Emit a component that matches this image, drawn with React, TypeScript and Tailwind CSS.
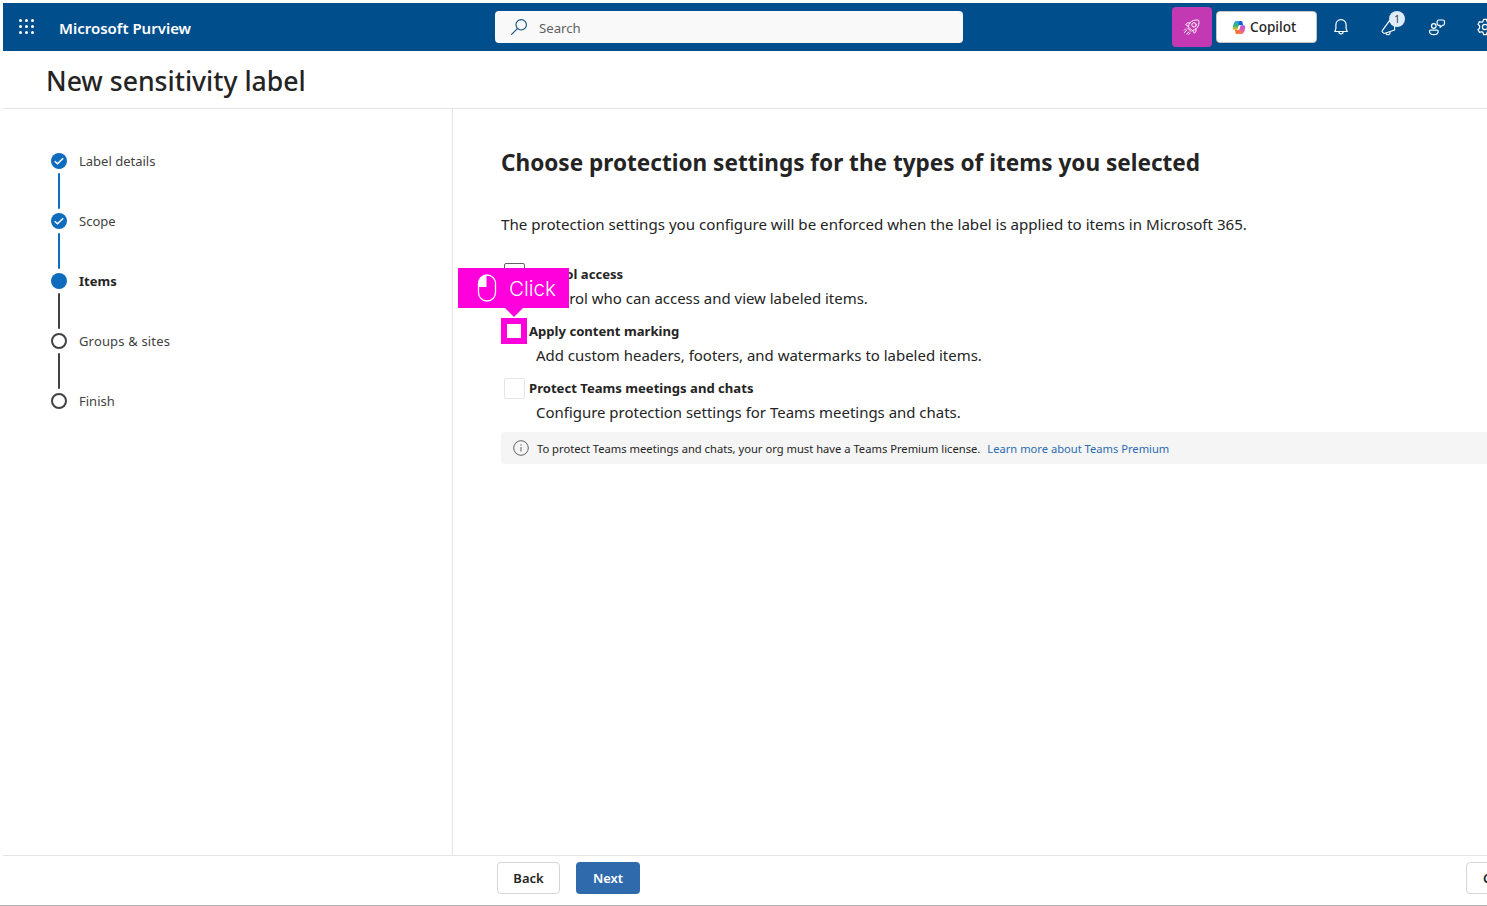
import React from "react";

type StepState = "done" | "current" | "todo";

const steps: { label: string; state: StepState }[] = [
  { label: "Label details", state: "done" },
  { label: "Scope", state: "done" },
  { label: "Items", state: "current" },
  { label: "Groups & sites", state: "todo" },
  { label: "Finish", state: "todo" },
];

function Waffle() {
  const p = [1.5, 7.5, 13.5];
  return (
    <svg className="size-4" viewBox="0 0 16 16" fill="#fff">
      {p.map((y) => p.map((x) => <circle key={`${x}-${y}`} cx={x} cy={y} r="1.5" />))}
    </svg>
  );
}

function SearchIcon() {
  return (
    <svg className="size-4" viewBox="0 0 16 16" fill="none" stroke="#0f4c81" strokeWidth="1.1" strokeLinecap="round">
      <circle cx="10.2" cy="5.8" r="5.2" />
      <path d="M6.4 9.6 0.6 15.4" />
    </svg>
  );
}

function Rocket() {
  return (
    <svg className="size-5" viewBox="0 0 20 20" fill="none" stroke="#fff" strokeWidth="1" strokeLinecap="round" strokeLinejoin="round">
      <path d="M6.400 9.400c.4-2.800 2.300-5 5-5.900 1.900-.6 3.800-.6 5.200-.2.500 1.500.5 3.400-.2 5.200-1 2.600-3.100 4.500-5.900 5z" />
      <circle cx="12" cy="7.900" r="2.200" />
      <path d="M8 5.900c-1.700-.4-3.200.1-4.400 1.600l2.800 1.900M13.900 11.900c.5 1.700 0 3.200-1.500 4.400l-1.900-2.800" />
      <path d="M5.500 10.900 9 14.400M4.900 13l-2.500 2.500M6.900 14.900l-2.300 2.300M3.700 11.800l-1.300 1.300M8.100 16.100l-1.300 1.300" />
    </svg>
  );
}

function CopilotLogo() {
  return (
    <svg className="h-[13px] w-[14px]" viewBox="0 0 24 22">
      <defs>
        <linearGradient id="cpA" x1="0.3" y1="0" x2="0.3" y2="1">
          <stop offset="0" stopColor="#2aa7e8" />
          <stop offset="0.5" stopColor="#35b07c" />
          <stop offset="1" stopColor="#efc31c" />
        </linearGradient>
        <linearGradient id="cpB" x1="0.8" y1="0" x2="0.2" y2="1">
          <stop offset="0" stopColor="#a95af0" />
          <stop offset="0.5" stopColor="#f0569a" />
          <stop offset="1" stopColor="#f79b3c" />
        </linearGradient>
      </defs>
      <path fill="url(#cpA)" d="M15.500 0H7.500C5 0 3.600 2.500 2.600 5.500 1.500 9 0 15 3.800 15h3.900c1 0 1.900-.7 2.200-1.700l2-6.800C12.200 4.500 12.900 3 14 3h4.500C17.600 1 17 0 15.500 0z" />
      <path fill="#1a5fd8" d="M15.500 0c1.500 0 2 1.200 2.500 2.800L19.300 7H14.500c-1.500 0-2.200.6-2.700 2L11 2.500C12 1 13 0 15.500 0z" />
      <path fill="url(#cpB)" d="M8.500 22h8c2.500 0 3.900-2.500 4.900-5.500C22.500 13 24 7 20.200 7h-3.900c-1 0-1.900.7-2.200 1.700l-2 6.800C11.800 17.500 11.100 19 10 19H5.500c.9 2 1.500 3 3 3z" />
      <path fill="#f5733e" d="M8.500 22c-1.500 0-2-1.200-2.500-2.800L4.700 15H9.500c1.500 0 2.200-.6 2.700-2l.8 6.500C12 21 11 22 8.500 22z" />
      <path fill="#fff" d="M12.300 7h2.400l-2.900 8H9.300z" />
    </svg>
  );
}

function Bell() {
  return (
    <svg className="size-5" viewBox="0 0 20 20" fill="none" stroke="#fff" strokeWidth="1.200" strokeLinejoin="round">
      <path d="M10 2.600c-3 0-5.100 2.300-5.100 5.200v3.800L3.800 14.500h12.400l-1.100-2.900V7.800c0-2.900-2.100-5.200-5.100-5.200z" />
      <path d="M7.900 14.700a2.100 2.100 0 0 0 4.200 0" />
    </svg>
  );
}

function Megaphone() {
  return (
    <svg className="size-5" viewBox="0 0 20 20" fill="none" stroke="#fff" strokeWidth="1.200" strokeLinejoin="round">
      <path d="M10.500 3.600 3.500 13.300c-.6.900-.4 1.800.4 2.300l.6.400c.5.300 1 .3 1.500.2L15.600 13V8.500z" />
      <path d="M7 16.200c.4 1.200 1.300 1.700 2.400 1.500 1.300-.3 1.900-1.400 1.500-2.900" />
    </svg>
  );
}

function PersonFeedback() {
  return (
    <svg className="size-5" viewBox="0 0 20 20" fill="none" stroke="#fff" strokeWidth="1.200" strokeLinejoin="round">
      <circle cx="6.800" cy="9" r="2.300" />
      <path d="M3.500 13.200h6.700c.6 0 1 .4 1 1 0 2.100-1.700 3.400-4.300 3.400s-4.400-1.300-4.400-3.400c0-.6.4-1 1-1z" />
      <path d="M11.900 3h3.800a1.800 1.800 0 0 1 1.800 1.800v1.800a1.800 1.800 0 0 1-1.800 1.800h-.3l-2.300 2V8.400h-1.200a1.800 1.800 0 0 1-1.800-1.800V4.800A1.800 1.800 0 0 1 11.900 3z" />
    </svg>
  );
}

function Gear() {
  return (
    <svg className="size-5" viewBox="0 0 20 20" fill="none" stroke="#fff" strokeWidth="1.200" strokeLinejoin="round">
      <circle cx="10" cy="10" r="2.600" />
      <path d="M8.500 2.400h3l.5 2.200 1.300.7 2.200-.7 1.500 2.600-1.600 1.500v2.600l1.600 1.500-1.500 2.600-2.200-.7-1.300.7-.5 2.200h-3L8 15.400l-1.300-.7-2.200.7L3 12.800l1.600-1.500V8.700L3 7.200l1.500-2.600 2.200.7L8 4.600z" />
    </svg>
  );
}

function StepMarker({ state }: { state: StepState }) {
  if (state === "todo") return <span className="size-4 rounded-full border-2 border-[#424242]" />;
  return (
    <span className="flex size-4 items-center justify-center rounded-full bg-[#0f6cbd]">
      {state === "done" && (
        <svg className="size-4" viewBox="0 0 16 16" fill="none" stroke="#fff" strokeWidth="1.500">
          <path d="M3.700 8.300 6.500 10.800 12.200 5.200" />
        </svg>
      )}
    </span>
  );
}

function ClickHint() {
  return (
    <>
      <div className="absolute top-[-1px] left-0 size-[26px] border-[6px] border-[#ff00dc]" />
      <div className="absolute top-[-51px] left-[-43px] flex h-10 w-[111px] items-center bg-[#ff00dc] pl-[19px]">
        <svg className="h-7 w-5 shrink-0" viewBox="0 0 20 28" fill="none" stroke="#fff" strokeWidth="1.300">
          <rect x="1.500" y="1" width="17" height="26" rx="8.500" />
          <path fill="#fff" stroke="none" d="M1.500 13V9.500A8.500 8.500 0 0 1 9.500 1V13z" />
        </svg>
        <span className="relative top-px ml-3 font-[Inter] text-[20.600px] leading-none font-light text-white">Click</span>
      </div>
      <svg className="absolute top-[-11px] left-[4px] h-[9px] w-[18px]" viewBox="0 0 18 9">
        <path d="M0 0h18L9 9z" fill="#ff00dc" />
      </svg>
    </>
  );
}

function Option(props: {
  title: string;
  detail: string;
  box: string;
  children?: React.ReactNode;
}) {
  return (
    <div className="relative h-[57.300px]">
      <div className="flex h-6 items-center">
        <span className={`ml-[3px] h-[21px] w-[21px] shrink-0 rounded-[2px] border ${props.box}`} />
        <span className="ml-[4px] text-[13.100px] leading-5 font-bold">{props.title}</span>
      </div>
      <p className="pl-[35px] text-[14.960px] leading-6">{props.detail}</p>
      {props.children}
    </div>
  );
}

export default function App() {
  return (
    <div className="flex h-[906px] w-[1487px] flex-col overflow-hidden border-b border-[#b3b3b3] bg-white pt-[3px] pl-[3px] font-['Noto_Sans',sans-serif] whitespace-nowrap text-[#242424]">
      <header className="flex h-12 shrink-0 items-center bg-[#004e8c]">
        <div className="flex w-[492px] shrink-0 items-center pl-4">
          <Waffle />
          <span className="ml-6 pt-[2px] text-[15px] font-semibold text-white">Microsoft Purview</span>
        </div>
        <div className="flex h-8 w-[468px] shrink-0 items-center rounded-[4px] bg-[#f9f9f9] pl-4">
          <SearchIcon />
          <span className="ml-3 pt-[3px] text-[13.200px] text-[#616161]">Search</span>
        </div>
        <div className="ml-[209px] flex h-10 w-10 shrink-0 items-center justify-center rounded-[4px] bg-[#c239b3]">
          <Rocket />
        </div>
        <div className="ml-1 flex h-8 w-[101px] shrink-0 items-center rounded-[4px] border border-[#c8c6c4] bg-white pl-[15px]">
          <CopilotLogo />
          <span className="ml-[4px] pt-px text-[13.600px] font-medium">Copilot</span>
        </div>
        <div className="flex w-12 shrink-0 justify-center"><Bell /></div>
        <div className="relative flex w-12 shrink-0 justify-center">
          <Megaphone />
          <span className="absolute top-[-6px] left-6 flex size-4 items-center justify-center rounded-full bg-[#deecf9] text-[10px] text-[#333]">1</span>
        </div>
        <div className="flex w-12 shrink-0 justify-center"><PersonFeedback /></div>
        <div className="flex w-12 shrink-0 justify-center"><Gear /></div>
      </header>

      <div className="flex h-[58px] shrink-0 items-center border-b border-[#e5e5e5] pt-[5px] pl-[43px]">
        <h1 className="text-[26.600px] font-medium">New sensitivity label</h1>
      </div>

      <div className="flex h-[746px] shrink-0">
        <nav className="w-[450px] shrink-0 border-r border-[#e5e5e5] pt-11 pl-12">
          {steps.map((s, i) => (
            <div key={s.label} className="flex h-[60px] gap-3">
              <div className="flex flex-col items-center">
                <StepMarker state={s.state} />
                {i < steps.length - 1 && (
                  <span className={`mt-1 h-9 w-[2px] rounded-full ${s.state === "done" ? "bg-[#0f6cbd]" : "bg-[#424242]"}`} />
                )}
              </div>
              <span className={`text-[13px] leading-4 ${s.state === "current" ? "font-bold" : "text-[#424242]"} ${s.label === "Groups & sites" ? "tracking-[0.160px]" : ""}`}>{s.label}</span>
            </div>
          ))}
        </nav>

        <main className="w-[1034px] shrink-0 overflow-hidden pt-[38px] pl-12">
          <h2 className="text-[22.570px] leading-8 font-bold">Choose protection settings for the types of items you selected</h2>
          <p className="mt-[33px] text-[15.120px] leading-6">
            The protection settings you configure will be enforced when the label is applied to items in Microsoft 365.
          </p>
          <div className="mt-[25.500px]">
            <Option title="Control access" detail="Control who can access and view labeled items." box="border-[#616161]" />
            <Option title="Apply content marking" detail="Add custom headers, footers, and watermarks to labeled items." box="border-white">
              <ClickHint />
            </Option>
            <Option title="Protect Teams meetings and chats" detail="Configure protection settings for Teams meetings and chats." box="border-[#e5e5e5]" />
          </div>
          <div className="mt-[-1.400px] flex h-8 items-center rounded-l-[4px] bg-[#f5f5f5] pl-3">
            <svg className="size-4" viewBox="0 0 16 16" fill="none" stroke="#616161">
              <circle cx="8" cy="8" r="7.300" />
              <path d="M8 7v4.500M8 4.300v1.400" />
            </svg>
            <span className="ml-2 pt-[2px] text-[11.200px]">To protect Teams meetings and chats, your org must have a Teams Premium license.</span>
            <span className="ml-[7px] pt-[2px] text-[11.170px] text-[#2b6cb0]">Learn more about Teams Premium</span>
          </div>
        </main>
      </div>

      <footer className="flex h-[50px] shrink-0 items-start border-t border-[#e5e5e5] pt-1.5 pl-[494px]">
        <div className="flex h-8 w-[63px] shrink-0 items-center justify-center rounded-[4px] border border-[#d6d6d6] pt-px text-[13px] font-semibold">Back</div>
        <div className="ml-4 flex h-8 w-16 shrink-0 items-center justify-center rounded-[4px] bg-[#2f6aac] pt-px text-[13px] font-semibold text-white">Next</div>
        <div className="ml-[826px] flex h-8 w-20 shrink-0 items-center rounded-[4px] border border-[#d6d6d6] pt-px pl-4 text-[13px] font-semibold">Cancel</div>
      </footer>
    </div>
  );
}
